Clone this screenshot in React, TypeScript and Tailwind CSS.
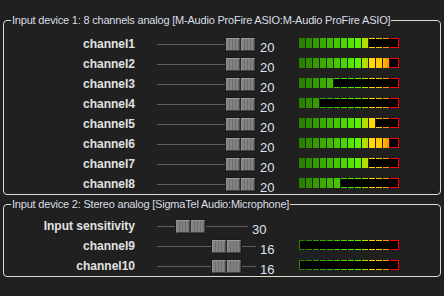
import React from "react";

// 14 meter segments, dark green -> yellow -> red
const SEGMENTS = [
  { fill: "bg-[#2a8000]", line: "border-[#2a8000]" },
  { fill: "bg-[#2f8e00]", line: "border-[#2f8e00]" },
  { fill: "bg-[#349c00]", line: "border-[#349c00]" },
  { fill: "bg-[#39aa00]", line: "border-[#39aa00]" },
  { fill: "bg-[#3fb900]", line: "border-[#3fb900]" },
  { fill: "bg-[#45c800]", line: "border-[#45c800]" },
  { fill: "bg-[#4bd700]", line: "border-[#4bd700]" },
  { fill: "bg-[#52e600]", line: "border-[#52e600]" },
  { fill: "bg-[#5af600]", line: "border-[#5af600]" },
  { fill: "bg-[#b4e000]", line: "border-[#b4e000]" },
  { fill: "bg-[#ffd800]", line: "border-[#ffd800]" },
  { fill: "bg-[#ffc800]", line: "border-[#ffc800]" },
  { fill: "bg-[linear-gradient(90deg,#ffc000,#ff8a00)]", line: "border-[#ff9800]" },
  { fill: "bg-[#ff0000]", line: "border-[#ff0000]" },
];

const DEVICE_1 = [
  { name: "channel1", level: 10 },
  { name: "channel2", level: 13 },
  { name: "channel3", level: 5 },
  { name: "channel4", level: 3 },
  { name: "channel5", level: 11 },
  { name: "channel6", level: 13 },
  { name: "channel7", level: 10 },
  { name: "channel8", level: 6 },
];

const DEVICE_2 = [
  { name: "channel9", level: 0 },
  { name: "channel10", level: 0 },
];

function Meter({ level }: { level: number }) {
  return (
    <div className="mb-[3px] flex h-[10px]">
      {SEGMENTS.map((seg, i) => {
        const last = i === SEGMENTS.length - 1;
        const w = last ? "w-[9px]" : "w-[7px]";
        if (i < level) {
          return (
            <div key={i} className={`${w} h-full pr-px`}>
              <div className={`h-full ${seg.fill}`} />
            </div>
          );
        }
        return (
          <div key={i} className={`${w} h-full bg-black`}>
            <div
              className={`h-full border-y ${seg.line} ${last ? "w-full border-r" : "w-[6px]"} ${i === 0 ? "border-l" : ""}`}
            />
          </div>
        );
      })}
    </div>
  );
}

function Thumb() {
  return (
    <div className="flex h-[15px] w-[31px] shrink-0 gap-px border border-[#1a1a1a] bg-[#2a2a2a]">
      {[0, 1].map((k) => (
        <div
          key={k}
          className="flex-1 border border-t-[#9a9a9a] border-l-[#8e8e8e] border-r-[#4a4a4a] border-b-[#444444] bg-[repeating-linear-gradient(90deg,#828282_0px,#828282_2px,#6e6e6e_2px,#6e6e6e_3px)]"
        />
      ))}
    </div>
  );
}

function Slider({ value, max, wide }: { value: number; max: number; wide: boolean }) {
  const travel = (wide ? 99 : 91) - 31;
  const left = Math.round((value / max) * travel);
  return (
    <div className={`flex h-[15px] shrink-0 items-center ${wide ? "w-[99px]" : "w-[91px]"}`}>
      <div className="h-px bg-[#5f5f5f]" style={{ width: left }} />
      <Thumb />
      <div className="h-px flex-1 bg-[#5f5f5f]" />
    </div>
  );
}

function Row({
  name,
  value,
  max,
  wide,
  level,
}: {
  name: string;
  value: number;
  max: number;
  wide: boolean;
  level?: number;
}) {
  return (
    <div className="flex h-[20px] items-center">
      <div className="w-[131px] text-right text-[12px] leading-[14px] font-bold text-[#e2e2e2]">{name}</div>
      <div className="flex w-[164px] items-center gap-[4px] pl-[22px]">
        <Slider value={value} max={max} wide={wide} />
        <span className="pt-[6px] text-[13px] leading-[15px] text-[#dde4ef]">{value}</span>
      </div>
      {level !== undefined && <Meter level={level} />}
    </div>
  );
}

function Group({ title, children }: { title: string; children: React.ReactNode }) {
  return (
    <fieldset className="mx-[3px] w-[438px] rounded-[4px] border border-[#deddcf]">
      <legend className="ml-[7px] px-px text-[11px] leading-[13px] tracking-[-0.2px] text-[#d9dde6]">{title}</legend>
      {children}
    </fieldset>
  );
}

export default function App() {
  return (
    <div className="h-[296px] w-[444px] overflow-hidden bg-[#202020] pt-[14px] font-['Liberation_Sans',Arial,sans-serif]">
      <Group title="Input device 1: 8 channels analog [M-Audio ProFire ASIO:M-Audio ProFire ASIO]">
        <div className="pt-[7px]">
          {DEVICE_1.map((ch) => (
            <Row key={ch.name} name={ch.name} value={20} max={20} wide level={ch.level} />
          ))}
        </div>
      </Group>
      <div className="mt-[3px]">
        <Group title="Input device 2: Stereo analog [SigmaTel Audio:Microphone]">
          <div className="pt-[5px]">
            <Row name="Input sensitivity" value={30} max={100} wide={false} />
            {DEVICE_2.map((ch) => (
              <Row key={ch.name} name={ch.name} value={16} max={20} wide level={ch.level} />
            ))}
          </div>
        </Group>
      </div>
    </div>
  );
}
